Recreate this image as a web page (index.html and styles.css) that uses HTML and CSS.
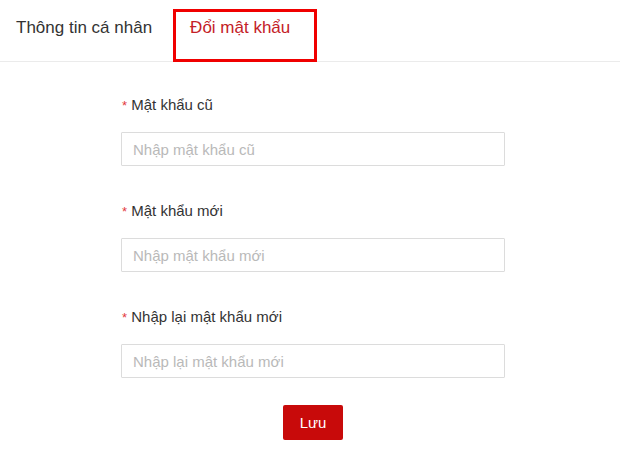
FILE: index.html
```html
<!DOCTYPE html>
<html lang="vi">
<head>
<meta charset="utf-8">
<title>Đổi mật khẩu</title>
<link rel="stylesheet" href="styles.css">
</head>
<body>
<div class="tabs">
  <div class="tab">Thông tin cá nhân</div>
  <div class="tab tab-active">Đổi mật khẩu</div>
</div>
<form class="form">
  <div class="group">
    <label class="label"><span class="req">*</span> Mật khẩu cũ</label>
    <input class="input" type="password" placeholder="Nhập mật khẩu cũ">
  </div>
  <div class="group">
    <label class="label"><span class="req">*</span> Mật khẩu mới</label>
    <input class="input" type="password" placeholder="Nhập mật khẩu mới">
  </div>
  <div class="group">
    <label class="label"><span class="req">*</span> Nhập lại mật khẩu mới</label>
    <input class="input" type="password" placeholder="Nhập lại mật khẩu mới">
  </div>
  <div class="actions">
    <button class="btn" type="button">Lưu</button>
  </div>
</form>
</body>
</html>
```

FILE: styles.css
```css
html, body {
  margin: 0;
  padding: 0;
  background: #fff;
}
body {
  font-family: "Liberation Sans", Arial, sans-serif;
  color: #333;
}
.tabs {
  display: flex;
  align-items: flex-start;
  height: 61px;
  border-bottom: 1px solid #ebebeb;
}
.tab {
  font-size: 17px;
  line-height: 20px;
  padding: 18px 0 0 16px;
  color: #333;
}
.tab-active {
  margin-left: 21px;
  margin-top: 9px;
  padding: 6px 24px 21px 14px;
  border: 3px solid #f00000;
  color: #c42127;
  position: relative;
  background: #fff;
}
.form {
  width: 384px;
  margin: 0 0 0 121px;
  padding-top: 33px;
}
.group {
  display: flex;
  flex-direction: column;
  margin-bottom: 35px;
}
.label {
  display: block;
  height: 20px;
  font-size: 15px;
  line-height: 20px;
  color: #333;
  margin-bottom: 17px;
  padding-left: 1px;
}
.req {
  color: #e3393c;
  font-size: 13px;
  line-height: 1;
}
.input {
  box-sizing: border-box;
  height: 34px;
  width: 384px;
  border: 1px solid #dcdcdc;
  padding: 0 11px;
  font-family: "Liberation Sans", Arial, sans-serif;
  font-size: 15px;
  color: #333;
  outline: none;
  border-radius: 1px;
}
.input::placeholder {
  color: #b9b9b9;
}
.actions {
  display: flex;
  justify-content: center;
  margin-top: -8px;
}
.btn {
  width: 60px;
  height: 35px;
  border: none;
  border-radius: 2px;
  background: #c80a0a;
  color: #fff;
  font-family: "Liberation Sans", Arial, sans-serif;
  font-size: 15px;
  cursor: pointer;
}
```
